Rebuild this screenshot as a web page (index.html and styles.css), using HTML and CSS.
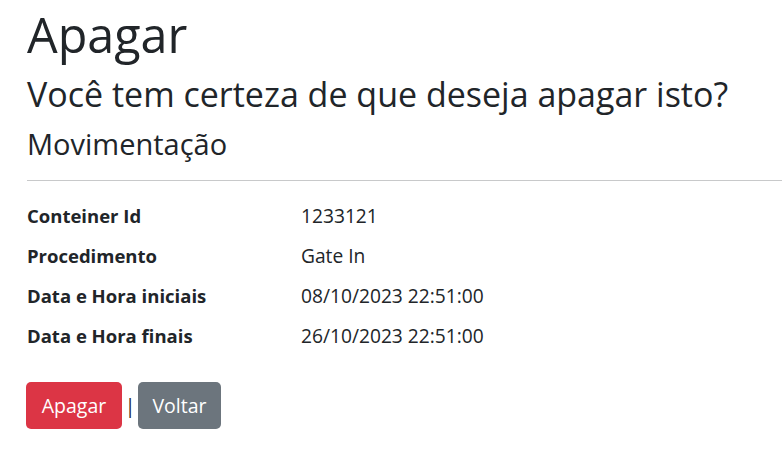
FILE: index.html
```html
<!DOCTYPE html>
<html lang="pt-BR">
<head>
<meta charset="utf-8">
<title>Apagar</title>
<link rel="stylesheet" href="styles.css">
</head>
<body>
<main class="page">
  <h1 class="title">Apagar</h1>
  <h3 class="question">Você tem certeza de que deseja apagar isto?</h3>
  <div class="details">
    <h4 class="entity">Movimentação</h4>
    <hr class="divider">
    <dl class="fields">
      <dt>Conteiner Id</dt>
      <dd>1233121</dd>
      <dt>Procedimento</dt>
      <dd>Gate In</dd>
      <dt>Data e Hora iniciais</dt>
      <dd>08/10/2023 22:51:00</dd>
      <dt>Data e Hora finais</dt>
      <dd>26/10/2023 22:51:00</dd>
    </dl>
    <form class="actions">
      <button type="button" class="btn btn-danger">Apagar</button>
      <span class="sep">|</span>
      <a class="btn btn-secondary" href="#">Voltar</a>
    </form>
  </div>
</main>
</body>
</html>
```
FILE: styles.css
```css
* { box-sizing: border-box; }
body {
  margin: 0;
  font-family: "Open Sans", "Noto Sans", sans-serif;
  color: #212529;
  background: #fff;
}
.page {
  padding: 5px 0 0 27px;
}
.title {
  margin: 0;
  font-size: 48.5px;
  line-height: 58px;
  font-weight: 400;
}
.question {
  margin: 10px 0 0;
  font-size: 34px;
  line-height: 42px;
  font-weight: 500;
}
.entity {
  margin: 11px 0 0;
  font-size: 29px;
  line-height: 36px;
  font-weight: 500;
}
.divider {
  margin: 18px 0 0;
  border: 0;
  border-top: 1px solid #c8c9ca;
  height: 0;
}
.fields {
  margin: 20px 0 0;
  display: grid;
  grid-template-columns: 274px 1fr;
  row-gap: 10px;
  font-size: 19.2px;
  line-height: 30px;
}
.fields dt {
  font-weight: 700;
  font-size: 18.5px;
}
.fields dd {
  margin: 0;
}
.actions {
  margin-top: 31px;
  margin-left: -1px;
  display: flex;
  align-items: center;
  font-size: 19.5px;
}
.btn {
  display: inline-flex;
  align-items: center;
  justify-content: center;
  height: 47px;
  padding: 0;
  border: 0;
  border-radius: 5px;
  color: #fff;
  font-family: inherit;
  font-size: 19.5px;
  text-decoration: none;
}
.btn-danger { background: #dc3545; width: 96px; }
.btn-secondary { background: #6c757d; width: 83px; }
.sep {
  width: 16px;
  text-align: center;
  color: #212529;
  line-height: 1;
}
```
